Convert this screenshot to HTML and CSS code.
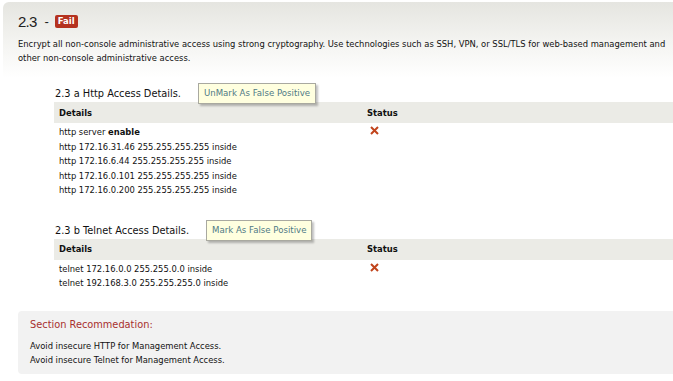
FILE: index.html
```html
<!DOCTYPE html>
<html>
<head>
<meta charset="utf-8">
<link rel="stylesheet" href="styles.css">
</head>
<body>
<div class="header">
  <div class="title"><span class="num">2.3</span><span class="dash">-</span><span class="badge">Fail</span></div>
  <p class="desc">Encrypt all non-console administrative access using strong cryptography. Use technologies such as SSH, VPN, or SSL/TLS for web-based management and other non-console administrative access.</p>
</div>

<div class="section">
  <div class="sec-head">
    <span class="sec-title">2.3 a Http Access Details.</span>
    <span class="btn btn-a">UnMark As False Positive</span>
  </div>
  <div class="table">
    <div class="thead"><div class="c1">Details</div><div class="c2">Status</div></div>
    <div class="tbody">
      <div class="c1">
        <div>http server <b>enable</b></div>
        <div>http 172.16.31.46 255.255.255.255 inside</div>
        <div>http 172.16.6.44 255.255.255.255 inside</div>
        <div>http 172.16.0.101 255.255.255.255 inside</div>
        <div>http 172.16.0.200 255.255.255.255 inside</div>
      </div>
      <div class="c2"><svg class="x" width="9" height="9" viewBox="0 0 9 9"><path d="M1 1 L8 8 M8 1 L1 8" stroke="#c1441c" stroke-width="2" stroke-linecap="butt"/></svg></div>
    </div>
  </div>
</div>

<div class="section sec-b">
  <div class="sec-head">
    <span class="sec-title">2.3 b Telnet Access Details.</span>
    <span class="btn btn-b">Mark As False Positive</span>
  </div>
  <div class="table">
    <div class="thead"><div class="c1">Details</div><div class="c2">Status</div></div>
    <div class="tbody">
      <div class="c1">
        <div>telnet 172.16.0.0 255.255.0.0 inside</div>
        <div>telnet 192.168.3.0 255.255.255.0 inside</div>
      </div>
      <div class="c2"><svg class="x" width="9" height="9" viewBox="0 0 9 9"><path d="M1 1 L8 8 M8 1 L1 8" stroke="#c1441c" stroke-width="2" stroke-linecap="butt"/></svg></div>
    </div>
  </div>
</div>

<div class="reco">
  <div class="reco-title">Section Recommedation:</div>
  <div class="reco-body">
    <div>Avoid insecure HTTP for Management Access.</div>
    <div>Avoid insecure Telnet for Management Access.</div>
  </div>
</div>
</body>
</html>
```
FILE: styles.css
```css
* { box-sizing: border-box; }
body {
  margin: 0;
  background: #fff;
  font-family: "DejaVu Sans", sans-serif;
  color: #111;
  font-size: 8.4px;
}
.header {
  margin: 2px 0 0 3px;
  height: 76px;
  padding: 11px 2px 0 15px;
  border-radius: 6px 0 0 0;
  background: linear-gradient(to bottom, #e5e5e0 0%, #f3f3f0 50%, #ffffff 100%);
}
.title {
  display: flex;
  align-items: center;
  height: 16px;
  color: #222;
}
.num {
  font-family: "Liberation Sans", sans-serif;
  font-size: 15px;
  letter-spacing: -0.8px;
}
.dash {
  font-family: "Liberation Sans", sans-serif;
  font-size: 13px;
  margin-left: 8px;
}
.badge {
  display: inline-block;
  margin-left: 6px;
  background: #b5321f;
  color: #fff;
  font-size: 8.5px;
  font-weight: bold;
  line-height: 13px;
  padding: 0 3px;
  border-radius: 2px;
}
.desc {
  margin: 8px 0 0 0;
  line-height: 14px;
}
.section {
  margin-left: 54px;
  margin-top: 4px;
}
.sec-b { margin-top: 21px; }
.sec-head {
  display: flex;
  align-items: flex-end;
  height: 20px;
  position: relative;
  z-index: 1;
}
.sec-title {
  font-size: 9.8px;
  line-height: 14px;
  color: #111;
  padding-left: 1px;
  margin-bottom: 1px;
}
.btn {
  background: #ffffdf;
  border: 1px solid #a9a9a0;
  box-shadow: 2px 2px 2px rgba(0,0,0,0.25);
  color: #4f7a86;
  font-size: 8.6px;
  line-height: 19px;
  height: 21px;
  padding: 0 5px;
  margin-bottom: -2px;
}
.btn-a { margin-left: 17px; }
.btn-b { margin-left: 17px; }
.thead {
  display: flex;
  background: #ebebe6;
  height: 21px;
  align-items: center;
  font-weight: bold;
}
.c1 { width: 313px; padding-left: 5px; }
.c2 { padding-left: 1px; }
.thead .c2 { padding-left: 0; }
.tbody {
  display: flex;
  padding-top: 2px;
}
.tbody .c1 div { line-height: 14.5px; }
.tbody .c2 { padding-left: 3px; padding-top: 1px; }
.x { display: block; }
.reco {
  margin: 20px 0 0 18px;
  background: #f2f2f2;
  border-radius: 4px 0 0 4px;
  height: 63px;
  padding: 7px 12px;
}
.reco-title {
  color: #a8302e;
  font-size: 9.8px;
  line-height: 14px;
}
.reco-body {
  margin-top: 7px;
}
.reco-body div { line-height: 14.5px; }
```
